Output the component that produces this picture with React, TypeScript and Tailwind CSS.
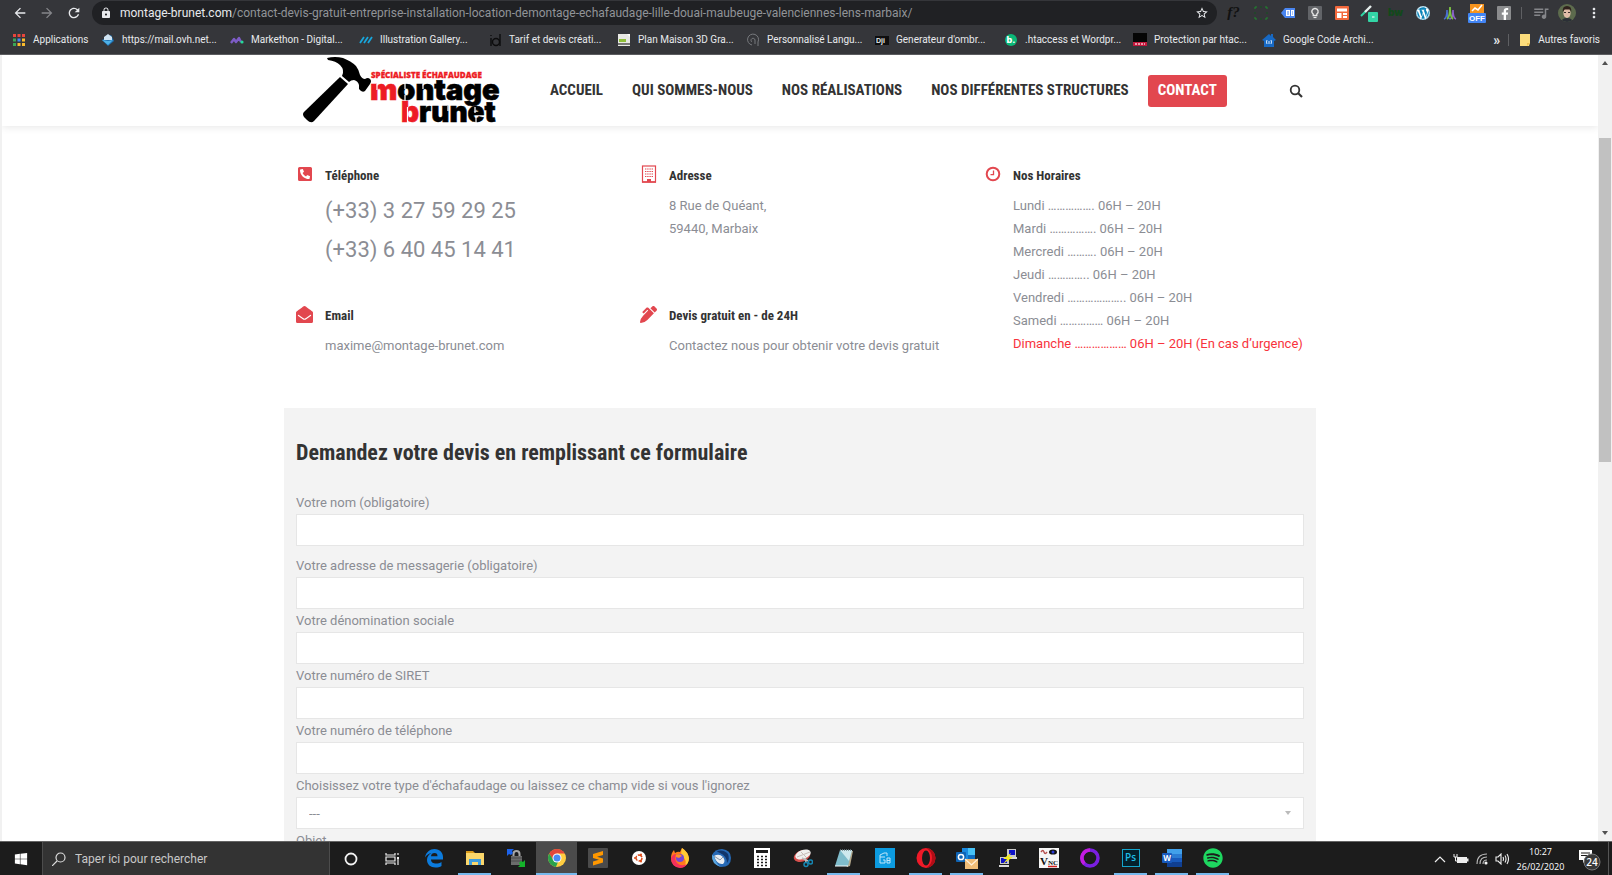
import { ReactNode } from "react";
import clsx from "clsx";
import { FaEnvelopeOpen, FaFacebookF, FaPenAlt, FaPhoneSquareAlt, FaSpotify, FaWindows, FaWordpress } from "react-icons/fa";
import { MdArrowBack, MdArrowForward, MdLock, MdMoreVert, MdOutlineQueueMusic, MdRefresh, MdStarBorder } from "react-icons/md";

type Item = { name: string; icon: ReactNode };

/* browser bar */

const extensions: Item[] = [
  {
    name: "Fontface",
    icon: <span className="font-['Liberation_Serif',serif] text-[15px] font-bold italic text-[#111]">f?</span>,
  },
  {
    name: "Capture",
    icon: (
      <svg viewBox="0 0 16 16" className="size-4" fill="none" stroke="#1f8a2d" strokeWidth="1">
        <path d="M2 4V2h2M12 2h2v2M14 12v2h-2M4 14H2v-2" />
        <path d="M7 2h2M7 14h2M2 7v2M14 7v2" stroke="#15531e" />
      </svg>
    ),
  },
  {
    name: "Tag",
    icon: (
      <svg viewBox="0 0 16 16" className="size-4">
        <path d="M1 8l4-5h10v10H5z" fill="#4a86f0" />
        <path d="M6 5h4v6H6zM11 5h3v6h-3z" fill="#fff" />
        <path d="M7 7h2M7 9h2M12 7h1M12 9h1" stroke="#4a86f0" />
      </svg>
    ),
  },
  {
    name: "Lighthouse",
    icon: (
      <svg viewBox="0 0 16 16" className="size-4">
        <rect x="1" y="1" width="14" height="14" rx="1" fill="#626468" />
        <path d="M8 3.5a3 3 0 0 1 1.8 5.5v1.5H6.2V9A3 3 0 0 1 8 3.5z" fill="none" stroke="#e8e8e8" strokeWidth="1.3" />
        <path d="M6.5 12.5h3" stroke="#e8e8e8" strokeWidth="1.2" />
      </svg>
    ),
  },
  {
    name: "Mise en page",
    icon: (
      <svg viewBox="0 0 16 16" className="size-4">
        <rect x="1" y="1" width="14" height="14" rx="1" fill="#f2683c" />
        <path d="M3 3.5h10v3H3zM3 8h4.5v5H3zM9 8h4v2H9zM9 11h4v2H9z" fill="#fff" />
      </svg>
    ),
  },
  {
    name: "Pipette",
    icon: (
      <svg viewBox="0 0 18 18" className="size-[18px]">
        <path d="M1 12L6 7" stroke="#2fd6a3" strokeWidth="2" />
        <path d="M5 8l6-6" stroke="#e7efec" strokeWidth="2.4" />
        <rect x="8" y="8" width="10" height="10" rx="1" fill="#33d6a6" />
        <path d="M12 13h2.5" stroke="#fff" />
      </svg>
    ),
  },
  {
    name: "BuiltWith",
    icon: <span className="font-['Inter',sans-serif] text-[10px] font-black text-[#12491b]">bw</span>,
  },
  {
    name: "WordPress",
    icon: (
      <span className="rounded-full bg-white">
        <FaWordpress className="size-[14px] text-[#0b84b8]" />
      </span>
    ),
  },
  {
    name: "Analyse",
    icon: (
      <svg viewBox="0 0 16 16" className="size-4" fill="none">
        <path d="M2 14c3-1 3-8 3-9 0 1 0 8 3 9" stroke="#4a6fd0" strokeWidth="1.6" />
        <path d="M8 14c3-1 3-8 3-9 0 1 0 8 3 9" stroke="#8b62c9" strokeWidth="1.6" />
        <path d="M5 14c3-2 3-9 3-12 0 3 0 10 3 12" stroke="#7ac043" strokeWidth="1.8" />
      </svg>
    ),
  },
  {
    name: "Statistiques",
    icon: (
      <svg viewBox="0 0 20 20" className="size-5">
        <rect x="3" y="1" width="14" height="10" fill="#f7941d" />
        <path d="M5 8l3-3 3 2 4-5" stroke="#fff" strokeWidth="1.6" fill="none" />
        <rect x="1" y="10" width="18" height="10" rx="1" fill="#4285f4" />
        <text x="10" y="18" textAnchor="middle" fontFamily="Liberation Sans, sans-serif" fontSize="8" fontWeight="700" fill="#fff">
          OFF
        </text>
      </svg>
    ),
  },
  {
    name: "Facebook",
    icon: (
      <span className="flex size-[14px] items-end justify-end rounded-[1px] bg-[#8b8c8e]">
        <FaFacebookF className="size-3 text-white" />
      </span>
    ),
  },
];

const bookmarks: Item[] = [
  {
    name: "https://mail.ovh.net...",
    icon: (
      <svg viewBox="0 0 14 14" className="size-[14px]">
        <path d="M1 7l6 6 6-5-3-6z" fill="#1d6fb0" />
        <path d="M3 4l4-3 4 3v3H3z" fill="#cfe3f2" />
        <path d="M1 7l6 1 5-1-5 5z" fill="#4fb2e8" />
      </svg>
    ),
  },
  {
    name: "Markethon - Digital...",
    icon: (
      <svg viewBox="0 0 14 14" className="size-[14px]">
        <path d="M1 10l3-4 2 3 3-4 2 4" fill="none" stroke="#7d5cc6" strokeWidth="2.4" strokeLinejoin="round" />
        <circle cx="12" cy="9" r="1.6" fill="#25d99b" />
      </svg>
    ),
  },
  {
    name: "Illustration Gallery...",
    icon: (
      <svg viewBox="0 0 14 14" className="size-[14px]">
        <path d="M1 10l4-6M5 10l4-6M9 10l4-6" stroke="#18a6dc" strokeWidth="1.8" />
      </svg>
    ),
  },
  {
    name: "Tarif et devis créati...",
    icon: (
      <svg viewBox="0 0 14 14" className="size-[14px]" fill="none" stroke="#0c0c0d" strokeWidth="1.4">
        <path d="M3 5v8M12 1v12" />
        <circle cx="8" cy="9" r="3.5" />
        <path d="M3 2v1" />
      </svg>
    ),
  },
  {
    name: "Plan Maison 3D Gra...",
    icon: (
      <svg viewBox="0 0 14 14" className="size-[14px]">
        <rect x="1" y="1" width="12" height="12" fill="#e8e8e4" />
        <path d="M2 6h7v3H2z" fill="#8fbf3a" />
        <path d="M1 11h12" stroke="#444" strokeWidth="1.4" />
        <path d="M10 1l3 3V1z" fill="#fff" />
      </svg>
    ),
  },
  {
    name: "Personnalisé Langu...",
    icon: (
      <svg viewBox="0 0 14 14" className="size-[14px]" fill="none" stroke="#77797d" strokeWidth="1">
        <path d="M6 12A5.5 5.5 0 1 1 12 9v4" />
        <path d="M9 11V7a2 2 0 1 0-3 2" />
      </svg>
    ),
  },
  {
    name: "Generateur d'ombr...",
    icon: (
      <svg viewBox="0 0 14 14" className="size-[14px]">
        <rect y="3" width="14" height="9" fill="#0e0e0f" />
        <text x="1" y="10" fontFamily="Liberation Sans, sans-serif" fontSize="7" fontWeight="700" fill="#e6e6e6">
          Dji
        </text>
      </svg>
    ),
  },
  {
    name: ".htaccess et Wordpr...",
    icon: (
      <span className="flex size-3 items-center justify-center rounded-full bg-[#0bb878] font-['Inter',sans-serif] text-[9px] font-extrabold text-white">
        b.
      </span>
    ),
  },
  {
    name: "Protection par htac...",
    icon: (
      <svg viewBox="0 0 14 14" className="size-[14px]">
        <rect width="14" height="9" fill="#050505" />
        <rect y="9" width="14" height="4" fill="#c2183c" />
        <path d="M2 11h10" stroke="#f2c4ce" strokeWidth="1.4" strokeDasharray="2 1" />
      </svg>
    ),
  },
  {
    name: "Google Code Archi...",
    icon: (
      <svg viewBox="0 0 14 14" className="size-[14px]">
        <path d="M0 7l7-6 2 2V1h2v3l3 3-2 1v6H2V8z" fill="#1769c4" />
        <path d="M5 7q-1 2 0 4M9 7q1 2 0 4M7 8v3" stroke="#d9e9fb" fill="none" />
      </svg>
    ),
  },
];

function BrowserBar() {
  return (
    <div className="shrink-0 border-b border-[#5b5c5f] bg-[#35363a] font-['Roboto',sans-serif] text-[#e8eaed]">
      <div className="flex h-[25px] items-center pr-[10px] pl-3">
        <div className="flex gap-[11px]">
          <button aria-label="Précédent">
            <MdArrowBack className="size-4" />
          </button>
          <button aria-label="Suivant">
            <MdArrowForward className="size-4 text-[#85868a]" />
          </button>
          <button aria-label="Actualiser">
            <MdRefresh className="size-4" />
          </button>
        </div>
        <div className="ml-[10px] flex h-6 min-w-0 flex-1 items-center rounded-full bg-[#202124] px-2">
          <MdLock className="size-3 shrink-0" />
          <div className="ml-2 min-w-0 flex-1 truncate text-[12px] text-[#919498]">
            <span className="text-[#e8eaed]">montage-brunet.com</span>
            /contact-devis-gratuit-entreprise-installation-location-demontage-echafaudage-lille-douai-maubeuge-valenciennes-lens-marbaix/
          </div>
          <button aria-label="Ajouter aux favoris">
            <MdStarBorder className="size-[14px]" />
          </button>
        </div>
        <div className="ml-[3px] flex">
          {extensions.map((e) => (
            <button key={e.name} aria-label={e.name} className="flex h-6 w-[27px] items-center justify-center">
              {e.icon}
            </button>
          ))}
        </div>
        <div className="ml-1 h-3 w-px bg-[#5f6063]" />
        <button aria-label="File de lecture" className="ml-[10px]">
          <MdOutlineQueueMusic className="size-[18px] text-[#85868a]" />
        </button>
        <button aria-label="Profil" className="ml-2">
          <svg viewBox="0 0 18 18" className="size-[18px] rounded-full">
            <rect width="18" height="18" fill="#5d6b4d" />
            <path d="M3 18q1-4 6-4t6 4z" fill="#2b2f36" />
            <ellipse cx="9" cy="9" rx="3.6" ry="5" fill="#e0bda8" />
            <path d="M4.800 8Q4 2 9 2t4.200 6L12 5.500H6.500z" fill="#2f211c" />
            <path d="M6 8.500h2M10 8.500h2" stroke="#3b302c" strokeWidth="1" />
          </svg>
        </button>
        <button aria-label="Menu" className="ml-[10px]">
          <MdMoreVert className="size-4" />
        </button>
      </div>
      <nav className="flex h-[29px] items-center px-3 text-[10px]">
        <a href="#" className="flex w-[89px] shrink-0 items-center gap-[7px]">
          <svg viewBox="0 0 14 14" className="size-[14px]">
            <path d="M1 1h3v3H1zM5.500 1h3v3h-3zM10 1h3v3h-3z" fill="#e8453c" />
            <path d="M1 5.500h3v3H1z" fill="#3aa757" />
            <path d="M5.500 5.500h3v3h-3z" fill="#4688f1" />
            <path d="M10 5.500h3v3h-3zM5.500 10h3v3h-3zM10 10h3v3h-3z" fill="#f9bb2d" />
            <path d="M1 10h3v3H1z" fill="#3aa757" />
          </svg>
          Applications
        </a>
        {bookmarks.map((b) => (
          <a key={b.name} href="#" className="flex w-[129px] shrink-0 items-center gap-[7px] whitespace-nowrap">
            <span className="flex w-[14px] justify-center">{b.icon}</span>
            {b.name}
          </a>
        ))}
        <div className="ml-auto flex shrink-0 items-center">
          <button aria-label="Autres" className="text-[14px] leading-none font-bold">
            »
          </button>
          <div className="ml-2 h-3 w-px bg-[#5f6063]" />
          <a href="#" className="ml-[10px] flex items-center gap-[7px]">
            <svg viewBox="0 0 12 14" className="h-[14px] w-3">
              <path d="M1 1h10v9l-1 3H1z" fill="#fbdc7c" />
              <path d="M8 13v-3h3" fill="#eec04e" />
            </svg>
            Autres favoris
          </a>
        </div>
      </nav>
    </div>
  );
}

/* website */

function Logo() {
  return (
    <svg viewBox="0 0 200 71" className="h-[71px] w-[200px]" role="img" aria-label="Montage Brunet">
      <path
        d="M27 3Q35 1 43 3Q51 6 56 11Q59 15 60 20Q62 24 65 24Q68 22 70 24Q72 26 70 29L65 36Q62 38 59 34L59 30Q58 26 54 25Q51 25 49 27L42 21Q45 15 40 10Q36 6 28 5z"
        fill="#000"
      />
      <path d="M40 22L48 29L14 66Q11 69 7 65L4 62Q2 59 4 57z" fill="#000" />
      <text x="71" y="23" fontFamily="Open Sans, sans-serif" fontWeight="800" fontSize="8" fill="#ed1c24" stroke="#ed1c24" strokeWidth="0.3">
        SPÉCIALISTE ÉCHAFAUDAGE
      </text>
      <g fontFamily="Inter, sans-serif" fontWeight="900" strokeWidth="0.6">
        <text x="70" y="45" fontSize="29" fill="#000" stroke="#000">
          <tspan fill="#ed1c24" stroke="#ed1c24">
            m
          </tspan>
          ontage
        </text>
        <text x="101" y="67" fontSize="28" fill="#000" stroke="#000">
          <tspan fill="#ed1c24" stroke="#ed1c24">
            b
          </tspan>
          runet
        </text>
      </g>
      {/* stencil cuts */}
      <path
        d="M77 29v6M105 28v6M105 40v6M123 29v5M107.500 52v16M148 51v5M175 52v6M176 62v6"
        stroke="#fff"
        strokeWidth="1.200"
      />
    </svg>
  );
}

const menu = ["ACCUEIL", "QUI SOMMES-NOUS", "NOS RÉALISATIONS", "NOS DIFFÉRENTES STRUCTURES"];

function SiteHeader() {
  return (
    <header className="relative bg-white shadow-[0_1px_8px_rgba(0,0,0,0.10)]">
      <div className="mx-auto flex h-[71px] max-w-[1032px] items-center px-4">
        <a href="#">
          <Logo />
        </a>
        <nav className="ml-[50px] flex items-center gap-[29px] font-['Roboto_Condensed','Liberation_Sans_Narrow',sans-serif] text-[15px] font-bold whitespace-nowrap text-[#333]">
          {menu.map((m) => (
            <a key={m} href="#">
              {m}
            </a>
          ))}
          <a href="#" className="-ml-[10px] flex h-8 items-center rounded-[3px] bg-[#e2474f] px-[10px] text-white">
            CONTACT
          </a>
        </nav>
        <button aria-label="Rechercher" className="mr-[-3px] ml-auto">
          <svg viewBox="0 0 14 14" className="size-[14px]" fill="none" stroke="#333" strokeWidth="1.8">
            <circle cx="6" cy="6" r="4.3" />
            <path d="M9 9l4 4" strokeWidth="2.2" />
          </svg>
        </button>
      </div>
    </header>
  );
}

function Building() {
  return (
    <svg viewBox="0 0 16 18" className="h-[18px] w-4">
      <rect x="1.5" y="1" width="13" height="16" fill="none" stroke="#e2474f" strokeWidth="1.2" />
      <path d="M4 4h8M4 6.500h8M4 9h8M4 11.500h8" stroke="#e2474f" strokeDasharray="1.4 0.8" strokeWidth="1.2" />
      <path d="M6 17v-3h4v3z" fill="#e2474f" />
      <path d="M1 17h14" stroke="#e2474f" strokeWidth="1.5" />
    </svg>
  );
}

function Clock() {
  return (
    <svg viewBox="0 0 16 16" className="size-4" fill="none" stroke="#e2474f">
      <circle cx="8" cy="8" r="6.3" strokeWidth="2" />
      <path d="M8.500 4.500v4.200H5.500" strokeWidth="1.3" />
    </svg>
  );
}

function Info({ icon, title, className, children }: { icon: ReactNode; title: string; className?: string; children: ReactNode }) {
  return (
    <section className={clsx("flex gap-3 pl-3", className)}>
      <span className="flex h-5 w-[17px] shrink-0 items-center justify-center text-[#e2474f]">{icon}</span>
      <div>
        <h3 className="font-['Roboto_Condensed','Liberation_Sans_Narrow',sans-serif] text-[13px] leading-[23px] font-bold text-[#333]">
          {title}
        </h3>
        {children}
      </div>
    </section>
  );
}

const hours = [
  "Lundi ……………. 06H – 20H",
  "Mardi ……………. 06H – 20H",
  "Mercredi ………. 06H – 20H",
  "Jeudi ………….. 06H – 20H",
  "Vendredi ……………….. 06H – 20H",
  "Samedi …………… 06H – 20H",
];

function ContactInfos() {
  return (
    <div className="mx-auto grid max-w-[1032px] grid-cols-3 gap-y-[35px] pt-[38px] pb-[51px] text-[13px] leading-[23px]">
      <Info icon={<FaPhoneSquareAlt className="size-4" />} title="Téléphone">
        <div className="mt-1 text-[22px] leading-[39px]">
          <p>(+33) 3 27 59 29 25</p>
          <p>(+33) 6 40 45 14 41</p>
        </div>
      </Info>
      <Info icon={<Building />} title="Adresse">
        <div className="mt-[7px]">
          <p>8 Rue de Quéant,</p>
          <p>59440, Marbaix</p>
        </div>
      </Info>
      <Info icon={<Clock />} title="Nos Horaires" className="row-span-2">
        <div className="mt-[7px] whitespace-nowrap">
          {hours.map((h) => (
            <p key={h}>{h}</p>
          ))}
          <p className="text-[#f8333c]">Dimanche ……………… 06H – 20H (En cas d’urgence)</p>
        </div>
      </Info>
      <Info icon={<FaEnvelopeOpen className="size-[17px]" />} title="Email">
        <p className="mt-[7px]">maxime@montage-brunet.com</p>
      </Info>
      <Info icon={<FaPenAlt className="size-[17px]" />} title="Devis gratuit en - de 24H">
        <p className="mt-[7px]">Contactez nous pour obtenir votre devis gratuit</p>
      </Info>
    </div>
  );
}

function Field({ id, label, type = "text" }: { id: string; label: string; type?: string }) {
  return (
    <div>
      <label htmlFor={id} className="block">
        {label}
      </label>
      <input id={id} type={type} className="block h-8 w-full border border-[#e6e6e6] bg-white px-3 outline-none" />
    </div>
  );
}

function QuoteForm() {
  return (
    <form className="mx-auto max-w-[1032px] bg-[#f3f3f3] px-3 pt-[31px] pb-8 text-[13px] leading-[23px]">
      <h2 className="mb-6 font-['Roboto_Condensed','Liberation_Sans_Narrow',sans-serif] text-[22px] leading-7 font-bold text-[#333]">
        Demandez votre devis en remplissant ce formulaire
      </h2>
      <div className="mb-2">
        <Field id="nom" label="Votre nom (obligatoire)" />
      </div>
      <Field id="mail" type="email" label="Votre adresse de messagerie (obligatoire)" />
      <Field id="societe" label="Votre dénomination sociale" />
      <Field id="siret" label="Votre numéro de SIRET" />
      <Field id="tel" type="tel" label="Votre numéro de téléphone" />
      <label htmlFor="type" className="block">
        Choisissez votre type d'échafaudage ou laissez ce champ vide si vous l'ignorez
      </label>
      <div className="relative">
        <select id="type" className="block h-8 w-full appearance-none border border-[#e6e6e6] bg-white px-3 outline-none">
          <option>---</option>
        </select>
        <svg viewBox="0 0 6 4" className="pointer-events-none absolute top-[14px] right-[13px] h-1 w-[6px]">
          <path d="M0 0h6L3 4z" fill="#bbb" />
        </svg>
      </div>
      <Field id="objet" label="Objet" />
    </form>
  );
}

function Scrollbar() {
  return (
    <div className="flex w-[14px] shrink-0 flex-col items-center bg-[#f1f1f1]">
      <svg viewBox="0 0 14 16" className="h-4 w-[14px] shrink-0">
        <path d="M4 10h6L7 6z" fill="#505050" />
      </svg>
      <div className="flex w-full flex-1 flex-col items-center">
        <div className="mt-[67px] h-[43%] w-3 bg-[#c1c1c1]" />
      </div>
      <svg viewBox="0 0 14 16" className="h-4 w-[14px] shrink-0">
        <path d="M4 6h6l-3 4z" fill="#505050" />
      </svg>
    </div>
  );
}

/* windows taskbar */

type TaskbarApp = Item & { open?: boolean; active?: boolean };

const apps: TaskbarApp[] = [
  {
    name: "Edge",
    icon: (
      <svg viewBox="0 0 20 20" className="size-5">
        <path
          d="M1 9.500C2 4 6 1 10.500 1 16 1 19 5 19 9v2.500H7c0 3 2.500 4 5 4 2 0 4-.5 5.500-1.500v4C16 19 13.500 19.500 11.500 19.500 6.500 19.500 3 16.500 3 12c0-3 1.500-5.500 4.500-7C5 5.500 2.500 7 1 9.500zM7 8.300h6.500C13.500 6 12.500 5 10.500 5S7.300 6 7 8.300z"
          fill="#0c7bdc"
        />
      </svg>
    ),
  },
  {
    name: "Explorateur",
    open: true,
    icon: (
      <svg viewBox="0 0 20 20" className="size-5">
        <path d="M1 3h7l2 2v12H1z" fill="#d99a1c" />
        <path d="M1 5h18v12H1z" fill="#fbd76b" />
        <path d="M4 17v-6h12v6h-3v-3H7v3z" fill="#3f9ddd" />
      </svg>
    ),
  },
  {
    name: "WinSCP",
    icon: (
      <svg viewBox="0 0 20 20" className="size-5">
        <path d="M7.500 9V6a3 3 0 0 1 6 0v3" fill="none" stroke="#a8a8a8" strokeWidth="2" />
        <path d="M5 8h11v9H5z" fill="#6c6c6c" />
        <path d="M5 10h11M5 13h11" stroke="#4a4a4a" />
        <path d="M1 1h7L6 3l1 2-2 2-2-1-2 2z" fill="#1c63ec" />
        <path d="M19 19h-7l2-2-1-2 2-2 2 1 2-2z" fill="#14b32a" />
      </svg>
    ),
  },
  {
    name: "Chrome",
    open: true,
    active: true,
    icon: (
      <svg viewBox="0 0 20 20" className="size-5">
        <circle cx="10" cy="10" r="9" fill="#ffcd40" />
        <path d="M2.200 5.500A9 9 0 0 1 17.800 5.500H10L6 12z" fill="#e3473c" />
        <path d="M2.200 5.500L6.500 12.300 11 14 8.900 18.900A9 9 0 0 1 2.200 5.500z" fill="#2ba24c" />
        <circle cx="10" cy="10" r="4.5" fill="#fff" />
        <circle cx="10" cy="10" r="3.5" fill="#4a8af4" />
      </svg>
    ),
  },
  {
    name: "Sublime Text",
    icon: (
      <svg viewBox="0 0 20 20" className="size-5">
        <rect width="20" height="20" rx="1" fill="#4b4b4b" />
        <path d="M5 6l10-3v4L9 8.800l6 1.700v4L5 17.500v-4l6-1.800-6-1.700z" fill="#ff9800" />
      </svg>
    ),
  },
  {
    name: "Ubuntu",
    icon: (
      <svg viewBox="0 0 14 14" className="size-[14px]">
        <circle cx="7" cy="7" r="7" fill="#fff" />
        <circle cx="7" cy="7" r="3" fill="none" stroke="#dd4814" strokeWidth="1.4" strokeDasharray="5 1.28" />
        <circle cx="3" cy="7" r="1" fill="#dd4814" />
        <circle cx="9" cy="3.5" r="1" fill="#dd4814" />
        <circle cx="9" cy="10.5" r="1" fill="#dd4814" />
      </svg>
    ),
  },
  {
    name: "Firefox",
    icon: (
      <svg viewBox="0 0 20 20" className="size-5">
        <path d="M1 10Q1 5 4 2l1 3q3-2 5-1l2-4q6 4 7 10a9 9 0 0 1-18 1z" fill="#ff7a1c" />
        <path d="M12 0q6 4 7 10 0 5-4 8 2-6-2-9-3-3-1-9z" fill="#ffcb35" />
        <path d="M1 10q0 9 9 10 5 0 7-4-6 3-10-1-3-4-1-9-3 0-5 4z" fill="#f4305c" />
        <circle cx="10" cy="10" r="4" fill="#7547d6" />
        <path d="M6 7q4-2 6 1-2 1-3 2l-3-1z" fill="#ff8f24" />
      </svg>
    ),
  },
  {
    name: "Thunderbird",
    icon: (
      <svg viewBox="0 0 20 20" className="size-5">
        <path d="M1 7Q4 1 11 1q9 1 9 9 0 9-10 9-8-2-9-12z" fill="#2669b5" />
        <path d="M6 3q7-2 11 3 2 5-1 9 0-7-7-10-3-1-3-2z" fill="#12366b" />
        <path d="M3 8q5-3 9 1 3 4 0 7-6 1-9-8z" fill="#e9edf2" />
        <path d="M3 8l6 4 3-3" stroke="#8a97a8" fill="none" />
        <path d="M1 7q-1 9 9 12-5-3-7-11z" fill="#5aa6e0" />
      </svg>
    ),
  },
  {
    name: "Calculatrice",
    icon: (
      <svg viewBox="0 0 16 20" className="h-5 w-4">
        <rect width="16" height="20" fill="#fff" />
        <path d="M2 2h12v3H2z" fill="#1d1d1d" />
        <path d="M3 8.500h11M3 11.500h11M3 14.500h11M3 17.500h11" stroke="#1d1d1d" strokeWidth="1.6" strokeDasharray="2 2" />
      </svg>
    ),
  },
  {
    name: "Outil Capture",
    icon: (
      <svg viewBox="0 0 20 20" className="size-5">
        <ellipse cx="9" cy="8" rx="8.500" ry="5.500" transform="rotate(-20 9 8)" fill="#d8504d" />
        <ellipse cx="10" cy="6.500" rx="8" ry="4.500" transform="rotate(-20 10 6.500)" fill="#f1f0ef" />
        <path d="M4 9l13-5M8 4l6 6" stroke="#c9bcb8" />
        <path d="M9 10l6 3M12 10l1 4" stroke="#bbb" strokeWidth="1.5" />
        <circle cx="13" cy="16.5" r="2" fill="none" stroke="#1687b3" strokeWidth="1.5" />
        <circle cx="17.5" cy="14" r="2" fill="none" stroke="#1687b3" strokeWidth="1.5" />
      </svg>
    ),
  },
  {
    name: "Bloc-notes",
    open: true,
    icon: (
      <svg viewBox="0 0 20 20" className="size-5">
        <path d="M6 3h13l-3 15-3 1z" fill="#b5a98c" />
        <path d="M6 2h12l-4 16H1z" fill="#7fbccb" />
        <path d="M6 2h12l-3 11z" fill="#cfe9ee" />
        <path d="M6 2h12" stroke="#6d7f84" strokeWidth="1.5" strokeDasharray="1 1" />
        <path d="M1 18h13" stroke="#f4fafb" />
      </svg>
    ),
  },
  {
    name: "GoDocs",
    icon: (
      <svg viewBox="0 0 20 20" className="size-5">
        <rect width="20" height="20" fill="#0c9be0" />
        <path d="M5 9V7l4-2h3v3M5 9h5M5 9v6h5v-3H8M12 10h3v5h-3zM12 12.500h3" fill="none" stroke="#bfe6fa" />
      </svg>
    ),
  },
  {
    name: "Opera",
    open: true,
    icon: (
      <svg viewBox="0 0 20 20" className="size-5">
        <ellipse cx="10" cy="10" rx="9.5" ry="10" fill="#f01a28" />
        <path d="M10 0a9.500 10 0 0 1 0 20q6-3 6-10T10 0z" fill="#b00d16" />
        <ellipse cx="10" cy="10" rx="4" ry="7.5" fill="#1c1c1c" />
      </svg>
    ),
  },
  {
    name: "Outlook",
    open: true,
    icon: (
      <svg viewBox="0 0 22 22" className="size-[22px]">
        <path d="M6 1h13v14H6z" fill="#1a8ae0" />
        <path d="M12 1h7v7h-7z" fill="#46c1f5" />
        <path d="M12 8h7v7h-7z" fill="#0f6cbf" />
        <rect y="5" width="10" height="10" rx="1" fill="#0f64b5" />
        <circle cx="5" cy="10" r="2.6" fill="none" stroke="#fff" strokeWidth="1.5" />
        <rect x="9" y="12" width="13" height="10" fill="#efbd78" />
        <path d="M9 12l6.500 6 6.500-6" fill="none" stroke="#fff1dc" strokeWidth="1.2" />
      </svg>
    ),
  },
  {
    name: "PuTTY",
    icon: (
      <svg viewBox="0 0 20 20" className="size-5">
        <path d="M9 1h9v8H9zM2 9h9v7H2z" fill="#c9c9c9" />
        <path d="M11 2h6v5h-6zM3 10h6v5H3z" fill="#0d12c9" />
        <path d="M9 9h10v2H9zM1 17h10v2H1z" fill="#dadada" />
        <path d="M13 5l-8 6h4l-4 5 10-7h-4z" fill="#f4ec1e" />
      </svg>
    ),
  },
  {
    name: "VNC",
    icon: (
      <svg viewBox="0 0 20 20" className="size-5">
        <rect width="20" height="20" fill="#f6f6f6" />
        <ellipse cx="14" cy="4" rx="4" ry="2.6" fill="#111" />
        <circle cx="14" cy="4" r="1.5" fill="#2a3bd8" />
        <path d="M2 4q2-3 3 0t3 0" fill="none" stroke="#b6504f" strokeWidth="1.4" />
        <text x="1" y="17" fontFamily="Liberation Serif, serif" fontWeight="700" fill="#111">
          <tspan fontSize="11">V</tspan>
          <tspan fontSize="7">NC</tspan>
        </text>
        <path d="M9 18.500h9" stroke="#d12020" strokeWidth="1.5" />
      </svg>
    ),
  },
  {
    name: "Tor",
    icon: (
      <svg viewBox="0 0 20 20" className="size-5">
        <circle cx="10" cy="10" r="8" fill="none" stroke="#7a1fe0" strokeWidth="3.5" />
        <path d="M4.300 15.700A8 8 0 0 1 10 2" fill="none" stroke="#c31be0" strokeWidth="3.5" />
      </svg>
    ),
  },
  {
    name: "Photoshop",
    open: true,
    icon: (
      <span className="flex size-[18px] items-center justify-center border border-[#15a5cc] bg-[#04202b] text-[10px] font-semibold text-[#1fbde6]">
        Ps
      </span>
    ),
  },
  {
    name: "Word",
    open: true,
    icon: (
      <svg viewBox="0 0 20 20" className="size-5">
        <path d="M5 1h15v6H5z" fill="#41a0ea" />
        <path d="M5 6h15v5H5z" fill="#2b7cd3" />
        <path d="M5 10h15v5H5z" fill="#185abd" />
        <path d="M5 14h15v5H5z" fill="#103f91" />
        <rect y="5" width="10" height="10" rx="1" fill="#185abd" />
        <text x="5" y="13" textAnchor="middle" fontFamily="Open Sans, sans-serif" fontSize="8" fontWeight="700" fill="#fff">
          W
        </text>
      </svg>
    ),
  },
  { name: "Spotify", open: true, icon: <FaSpotify className="size-5 text-[#1ed760]" /> },
];

function Taskbar() {
  return (
    <footer className="flex h-[34px] shrink-0 border-t border-[#646464] bg-[#1c1c1c] font-['Open_Sans',sans-serif] text-white">
      <button aria-label="Démarrer" className="flex w-[42px] items-center justify-center">
        <FaWindows className="size-[14px]" />
      </button>
      <label className="flex w-[288px] items-center gap-[9px] border-x border-[#4c4c4c] bg-[#333] pl-[9px]">
        <svg viewBox="0 0 14 14" className="size-[14px]" fill="none" stroke="#ddd" strokeWidth="1.2">
          <circle cx="8.5" cy="5.5" r="4.5" />
          <path d="M5 9l-5 5" />
        </svg>
        <input
          type="text"
          aria-label="Taper ici pour rechercher"
          placeholder="Taper ici pour rechercher"
          className="min-w-0 flex-1 bg-transparent font-['Roboto',sans-serif] text-[12px] outline-none placeholder:text-[#c8c8c8]"
        />
      </label>
      <button aria-label="Cortana" className="flex w-[42px] items-center justify-center">
        <svg viewBox="0 0 14 14" className="size-[14px]">
          <circle cx="7" cy="7" r="5.5" fill="none" stroke="#f2f2f2" strokeWidth="1.8" />
        </svg>
      </button>
      <button aria-label="Affichage des tâches" className="flex w-[41px] items-center justify-center">
        <svg viewBox="0 0 16 14" className="h-[14px] w-4" fill="none" stroke="#eee" strokeWidth="1.2">
          <path d="M1 1v2h9V1M1 13v-2h9v2M1 5h9v4H1zM13 1v2M13 5v8" />
          <path d="M12 6h2" strokeWidth="2" />
        </svg>
      </button>
      {apps.map((a) => (
        <button
          key={a.name}
          aria-label={a.name}
          className={clsx("flex w-[41px] shrink-0 flex-col items-center", a.active && "bg-[#4b4b4b]")}
        >
          <span className="flex h-[31px] items-center">{a.icon}</span>
          {a.open && <span className={clsx("h-[2px] bg-[#76b9ed]", a.active ? "w-full" : "w-[33px]")} />}
        </button>
      ))}
      <div className="ml-auto flex shrink-0 items-center gap-[7px]">
        <svg viewBox="0 0 12 8" className="h-2 w-3" fill="none" stroke="#eee" strokeWidth="1.2">
          <path d="M1 7l5-5 5 5" />
        </svg>
        <svg viewBox="0 0 16 10" className="h-[10px] w-4">
          <path d="M4 3h10v6H4zM14 4.500h1.500v3H14z" fill="#eee" />
          <path d="M1 0v3h3V0M2.500 3v4H5" fill="none" stroke="#eee" />
        </svg>
        <svg viewBox="0 0 12 12" className="size-3" fill="none" stroke="#bbb" strokeWidth="1.1">
          <path d="M1 11Q1 1 11 1M4 11q0-7 7-7M7 11q0-4 4-4" />
          <circle cx="10" cy="10" r="1" fill="#fff" stroke="#fff" />
        </svg>
        <svg viewBox="0 0 14 12" className="h-3 w-[14px]" fill="none" stroke="#eee" strokeWidth="1.1">
          <path d="M1 4h2l3-3v10L3 8H1zM8 4q1 2 0 4M10 2.500q2 3.500 0 7M12 1q3 5 0 10" />
        </svg>
        <div className="w-[49px] text-center text-[9px] leading-[15px] whitespace-nowrap">
          <p>10:27</p>
          <p>26/02/2020</p>
        </div>
        <button aria-label="Notifications" className="ml-[6px]">
          <svg viewBox="0 0 23 24" className="h-6 w-[23px]">
            <path d="M1 3h13v10H8l-3 3v-3H1z" fill="#fff" />
            <path d="M3 6h9M3 8.500h9" stroke="#1c1c1c" />
            <circle cx="14" cy="15" r="8" fill="#3a3a3a" stroke="#777" />
            <text x="14" y="18.5" textAnchor="middle" fontFamily="Open Sans, sans-serif" fontSize="10" fontWeight="600" fill="#fff">
              24
            </text>
          </svg>
        </button>
        <div className="mr-[3px] h-[33px] w-px bg-[#555]" />
      </div>
    </footer>
  );
}

export default function App() {
  return (
    <div className="flex h-screen flex-col overflow-hidden">
      <BrowserBar />
      <div className="flex min-h-0 flex-1">
        <main className="min-w-0 flex-1 overflow-hidden border-l-2 border-[#f1f1f1] bg-white font-['Roboto',sans-serif] text-[#8b8d94]">
          <SiteHeader />
          <ContactInfos />
          <QuoteForm />
        </main>
        <Scrollbar />
      </div>
      <Taskbar />
    </div>
  );
}
